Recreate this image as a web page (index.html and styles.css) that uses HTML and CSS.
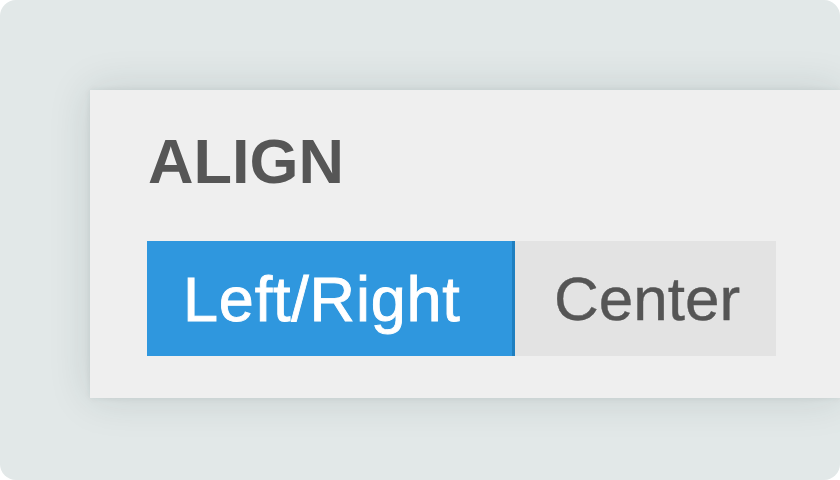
FILE: index.html
```html
<!DOCTYPE html>
<html>
<head>
<meta charset="utf-8">
<link rel="stylesheet" href="styles.css">
</head>
<body>
<div class="frame">
  <div class="panel">
    <div class="title">ALIGN</div>
    <div class="segmented">
      <div class="seg seg-active">Left/Right</div>
      <div class="seg seg-idle">Center</div>
    </div>
  </div>
</div>
</body>
</html>
```
FILE: styles.css
```css
html, body {
  margin: 0;
  padding: 0;
  background: #ffffff;
}
.frame {
  width: 840px;
  height: 480px;
  border-radius: 16px;
  overflow: hidden;
  background: #e2e8e8;
  padding: 90px 0 0 90px;
  box-sizing: border-box;
  font-family: "Liberation Sans", Arial, sans-serif;
}
.panel {
  height: 308px;
  background: #efefef;
  box-shadow: 0 0 40px rgba(20, 50, 50, 0.14), 0 0 6px rgba(20, 50, 50, 0.08);
  padding: 40px 0 0 57px;
  box-sizing: border-box;
}
.title {
  font-size: 63px;
  line-height: 1;
  font-weight: bold;
  color: #565656;
  margin-left: 1px;
}
.segmented {
  display: flex;
  margin-top: 48px;
}
.seg {
  height: 115px;
  display: flex;
  align-items: center;
  font-size: 62px;
  box-sizing: border-box;
}
.seg-active {
  width: 368px;
  background: #2f97de;
  color: #ffffff;
  padding-left: 36px;
  border-right: 3px solid #1f7fc0;
  font-size: 63px;
  letter-spacing: 0.8px;
  -webkit-text-stroke: 0.9px #ffffff;
}
.seg-idle {
  width: 261px;
  background: #e3e3e3;
  color: #555555;
  padding-left: 39px;
  -webkit-text-stroke: 0.4px #555555;
}
```
